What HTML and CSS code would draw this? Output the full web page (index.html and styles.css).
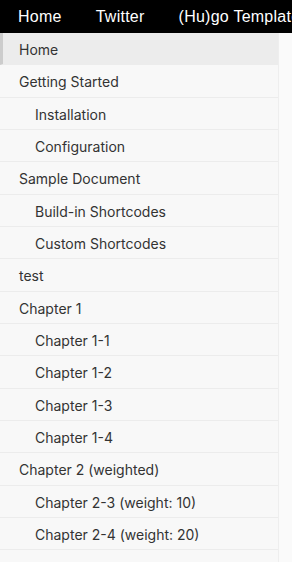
FILE: index.html
```html
<!DOCTYPE html>
<html lang="en">
<head>
    <meta charset="UTF-8">
    <meta name="viewport" content="width=device-width, initial-scale=1.0">
    <title>Hugo Docs</title>
    <link rel="stylesheet" href="styles.css">
</head>
<body>
    <nav class="topbar">
        <a class="topbar-link" href="#">Home</a>
        <a class="topbar-link" href="#">Twitter</a>
        <a class="topbar-link" href="#">(Hu)go Template Primer</a>
    </nav>

    <div class="layout">
        <ul class="sidebar">
            <li class="item active"><a href="#">Home</a></li>
            <li class="item"><a href="#">Getting Started</a></li>
            <li class="item sub"><a href="#">Installation</a></li>
            <li class="item sub"><a href="#">Configuration</a></li>
            <li class="item"><a href="#">Sample Document</a></li>
            <li class="item sub"><a href="#">Build-in Shortcodes</a></li>
            <li class="item sub"><a href="#">Custom Shortcodes</a></li>
            <li class="item"><a href="#">test</a></li>
            <li class="item"><a href="#">Chapter 1</a></li>
            <li class="item sub"><a href="#">Chapter 1-1</a></li>
            <li class="item sub"><a href="#">Chapter 1-2</a></li>
            <li class="item sub"><a href="#">Chapter 1-3</a></li>
            <li class="item sub"><a href="#">Chapter 1-4</a></li>
            <li class="item"><a href="#">Chapter 2 (weighted)</a></li>
            <li class="item sub"><a href="#">Chapter 2-3 (weight: 10)</a></li>
            <li class="item sub"><a href="#">Chapter 2-4 (weight: 20)</a></li>
        </ul>
        <div class="content"></div>
    </div>
</body>
</html>
```

FILE: styles.css
```css
html, body {
    height: 100%;
}
body {
    margin: 0;
    font-family: Inter, "Liberation Sans", sans-serif;
    background-color: #fafafa;
    color: #333;
    overflow: hidden;
}
.topbar {
    display: flex;
    height: 33px;
    align-items: center;
    background-color: #000;
    padding-left: 1px;
    white-space: nowrap;
    overflow: hidden;
}
.topbar-link {
    padding: 0 17px;
    color: #fff;
    text-decoration: none;
    font-family: "Liberation Sans", Arial, sans-serif;
    font-size: 16px;
    letter-spacing: 0.25px;
}
.layout {
    display: flex;
    height: calc(100% - 33px);
}
.sidebar {
    list-style: none;
    margin: 0;
    padding: 0;
    width: 278px;
    flex-shrink: 0;
    background-color: #f8f8f8;
    border-right: 1px solid #eee;
}
.item {
    border-bottom: 1px solid #ececec;
}
.item a {
    display: block;
    padding: 7px 10px 4.33px 19px;
    line-height: 20px;
    font-size: 14px;
    color: #333;
    text-decoration: none;
}
.item.sub a {
    padding-left: 35px;
}
.item.active {
    background-color: #ececec;
    border-left: 3px solid #ccc;
    border-bottom-color: #ececec;
}
.item.active a {
    padding-left: 16px;
}
.content {
    flex: 1;
}
```
